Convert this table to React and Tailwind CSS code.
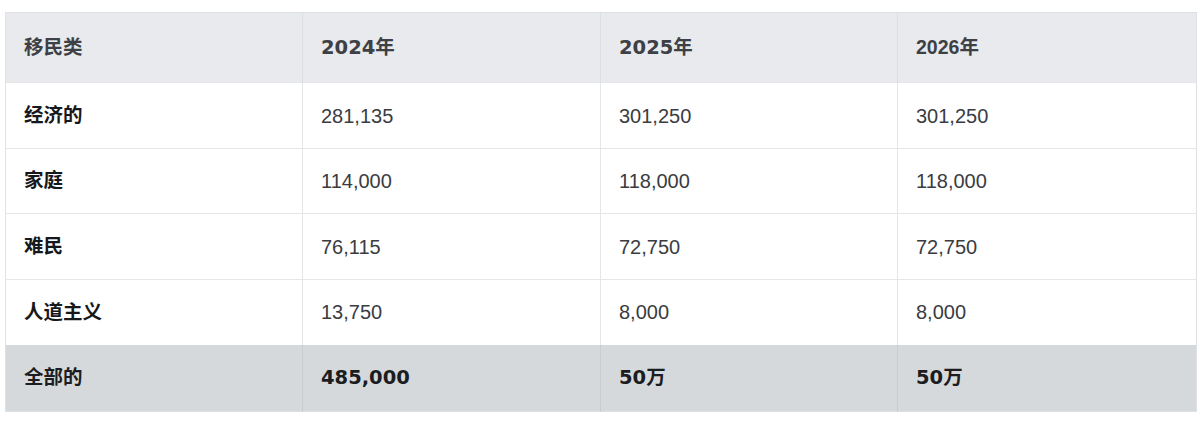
import React from "react";

const rows = [
  { label: "经济的", values: ["281,135", "301,250", "301,250"], h: "h-[66px]" },
  { label: "家庭", values: ["114,000", "118,000", "118,000"], h: "h-[65px]" },
  { label: "难民", values: ["76,115", "72,750", "72,750"], h: "h-[66px]" },
  { label: "人道主义", values: ["13,750", "8,000", "8,000"], h: "h-[65px]" },
];

const bold = "font-['DejaVu_Sans','Noto_Sans_CJK_SC',sans-serif] font-bold";
const boldArial = "font-['Liberation_Sans','Noto_Sans_CJK_SC',sans-serif] font-bold";
const regular = "font-['Liberation_Sans','Noto_Sans_CJK_SC',sans-serif]";

const headers = [
  { t: "移民类", f: bold },
  { t: "2024年", f: bold },
  { t: "2025年", f: bold },
  { t: "2026年", f: boldArial },
];

const App = () => {
  return (
    <div className="min-h-screen bg-white pt-[12px] px-[5px]">
      <table className="w-[1191px] table-fixed border-collapse text-[19.5px] border border-[#dfe1e4]">
        <colgroup>
          <col className="w-[297px]" />
          <col className="w-[298px]" />
          <col className="w-[297px]" />
          <col className="w-[299px]" />
        </colgroup>
        {/* Header */}
        <thead>
          <tr className="h-[70px] bg-[#e8eaed] text-[#3d4045]">
            {headers.map((h) => (
              <th
                key={h.t}
                className={`${h.f} text-left pl-[18px] border-l border-[#dcdfe2] first:border-l-0`}
              >
                {h.t}
              </th>
            ))}
          </tr>
        </thead>
        <tbody>
          {rows.map((r) => (
            <tr key={r.label} className={`${r.h} bg-white border-t border-[#e4e6e8]`}>
              <td className={`${bold} pl-[18px] text-[#16181b]`}>{r.label}</td>
              {r.values.map((v, i) => (
                <td
                  key={i}
                  className={`${regular} text-[20px] pl-[18px] text-[#3a3c3f] border-l border-[#e4e6e8]`}
                >
                  {v}
                </td>
              ))}
            </tr>
          ))}
          {/* Total */}
          <tr className="h-[67px] bg-[#d6d9dc] text-[#1b1d20]">
            <td className={`${bold} pl-[18px]`}>全部的</td>
            {["485,000", "50万", "50万"].map((v, i) => (
              <td key={i} className={`${bold} pl-[18px] border-l border-[#c9ccd0]`}>
                {v}
              </td>
            ))}
          </tr>
        </tbody>
      </table>
    </div>
  );
};

export default App;
